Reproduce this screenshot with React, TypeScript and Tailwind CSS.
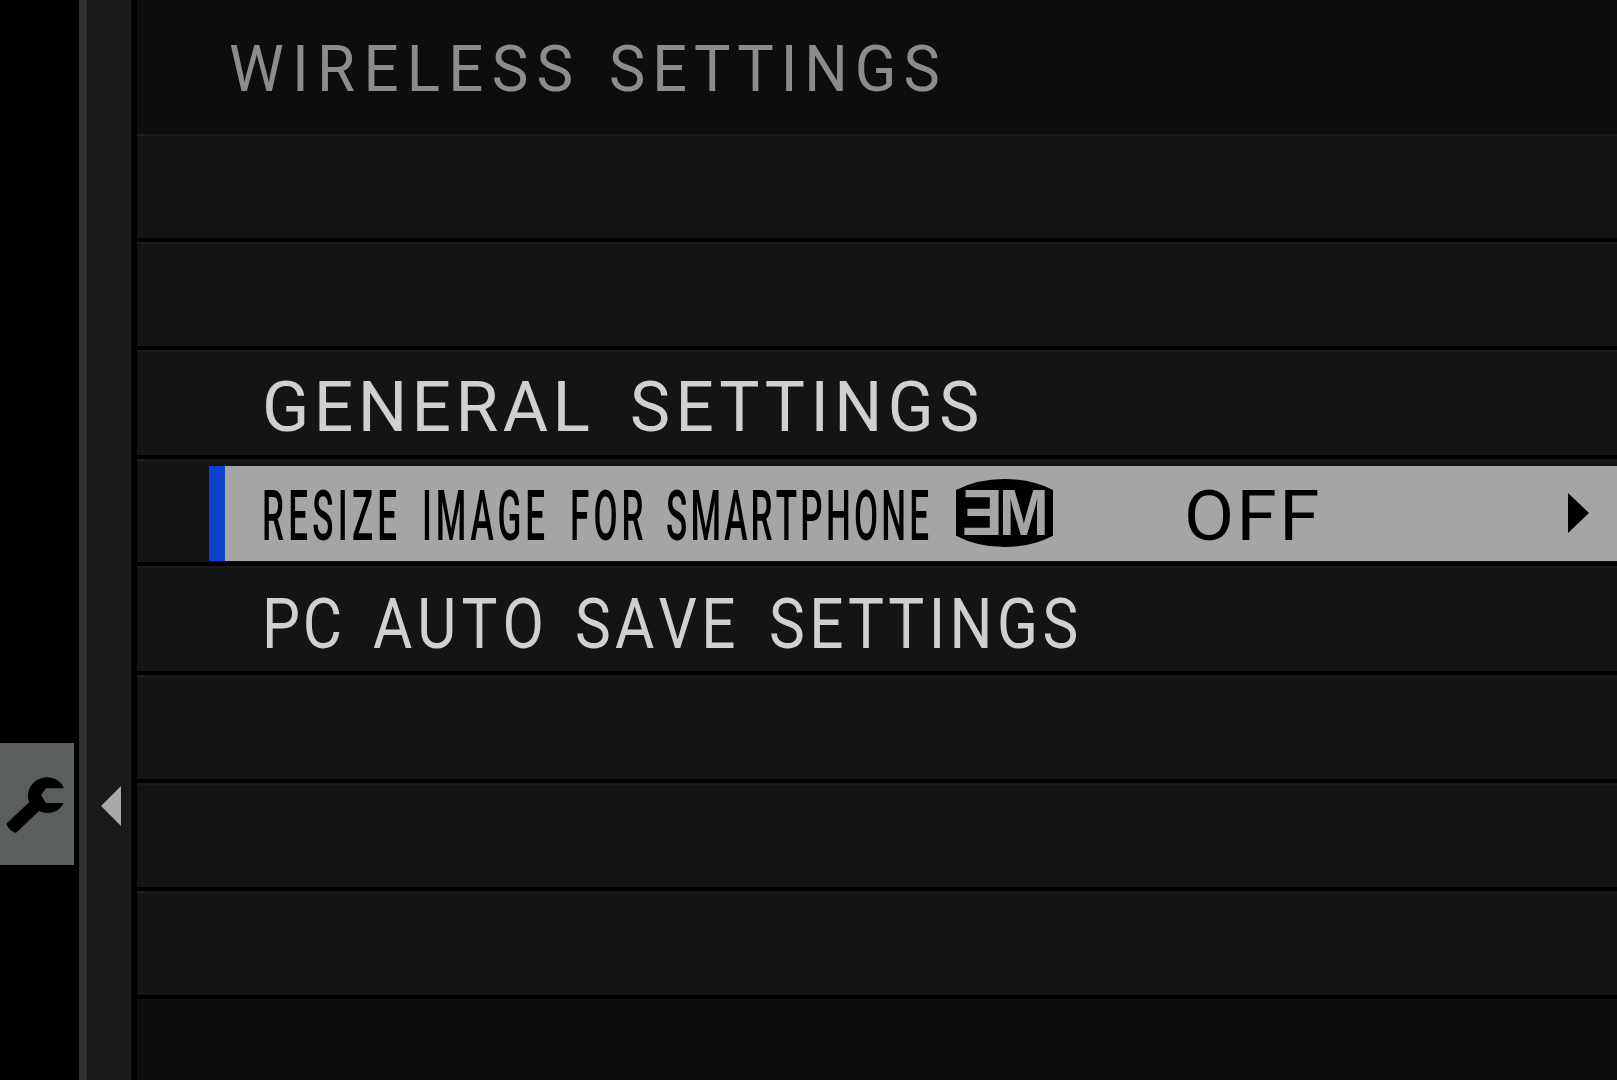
import type { ReactNode } from 'react';

function Word({ className, children }: { className: string; children: ReactNode }) {
  return (
    <span className="relative h-20 w-0 shrink-0">
      <span className={`block w-max origin-left whitespace-nowrap leading-[80px] [font-kerning:none] ${className}`}>
        {children}
      </span>
    </span>
  );
}

function Row({ className, children }: { className: string; children?: ReactNode }) {
  return (
    <div className={`shrink-0 border-t-4 border-black bg-[#141414] ${className}`}>
      <div className="h-0.5 bg-[#1b1b1b]" />
      {children}
    </div>
  );
}

function WrenchIcon() {
  return (
    <svg className="block h-[122px] w-[74px]" viewBox="0 68 222 366" aria-label="Setup">
      <path
        fill="#000"
        d="M190 199C180 182 163 171 142 171C108 171 84 196 84 226C84 234 85 240 88 245L22 307Q19 310 20 314Q28 330 45 337Q48 338 51 335L117 272C126 276 134 278 143 278C164 278 181 268 191 248H138L123 225L138 204H191Z"
      />
    </svg>
  );
}

function SizeBadge() {
  return (
    <svg
      className="ml-[28px] block h-[68px] w-[97px] shrink-0 overflow-visible"
      viewBox="79 87 291 204"
      role="img"
      aria-label="3M"
      fontFamily="'Liberation Sans', Arial, sans-serif"
      fontWeight="700"
      fontSize="193"
    >
      <path fill="#000" d="M79 120Q144 87 224 87Q305 87 370 120V257Q305 291 224 291Q144 291 79 257Z" />
      <text x="97" y="255" fill="#a5a5a5" textLength="122" lengthAdjust="spacingAndGlyphs">
        Ǝ
      </text>
      <text x="208" y="255" fill="#a5a5a5" textLength="149" lengthAdjust="spacingAndGlyphs">
        M
      </text>
    </svg>
  );
}

export default function App() {
  return (
    <div className="flex h-[1080px] w-[1617px] overflow-hidden bg-black font-[Roboto,sans-serif]">
      <aside className="w-[79px] shrink-0 pt-[743px]">
        <div className="w-[74px] bg-[#5a5e5d]">
          <WrenchIcon />
        </div>
      </aside>

      <div className="w-[52px] shrink-0 border-l-8 border-r-2 border-l-[#303030] border-r-[#1d2123] bg-[#181919] pt-[786px]">
        <svg className="ml-[14px] block h-10 w-5" viewBox="0 0 20 40">
          <path fill="#a9a9a9" d="M0 20L20 0V40Z" />
        </svg>
      </div>

      <main className="ml-[6px] flex min-w-0 flex-1 flex-col bg-[#0d0d0d]">
        <header className="flex h-[134px] shrink-0 pt-[29px] text-[65px] text-[#8c8c8c]">
          <div className="flex pl-[92.3px]">
            <Word className="scale-x-[0.95] tracking-[8.7px]">WIRELESS</Word>
            <span className="w-[379.9px]" />
            <Word className="scale-x-[0.94] tracking-[7.4px]">SETTINGS</Word>
          </div>
        </header>

        <div className="h-[104px] shrink-0 border-t-2 border-[#1b1b1b] bg-[#141414]" />
        <Row className="h-[108px]" />

        <Row className="h-[109px]">
          <div className="flex pl-[125px] pt-[16px] text-[69.5px] text-[#d0d0d0]">
            <Word className="tracking-[4.4px]">GENERAL</Word>
            <span className="w-[368.3px]" />
            <Word className="scale-x-[0.97] tracking-[5.6px]">SETTINGS</Word>
          </div>
        </Row>

        <Row className="h-[107px]">
          <div className="ml-[72px] mt-[5px] flex h-[95px] border-l-[16px] border-[#0d42cd] bg-[#a5a5a5] text-[70px] text-black">
            <div className="flex w-[703px] shrink-0 pl-[36.5px] pt-[10px] font-medium">
              <Word className="scale-x-50 tracking-[8.5px]">RESIZE</Word>
              <span className="w-[160.3px] shrink-0" />
              <Word className="scale-x-50 tracking-[7.9px]">IMAGE</Word>
              <span className="w-[148px] shrink-0" />
              <Word className="scale-x-50 tracking-[8.2px]">FOR</Word>
              <span className="w-[96.7px] shrink-0" />
              <Word className="scale-x-50 tracking-[6.4px]">SMARTPHONE</Word>
            </div>
            <div className="-mt-px flex items-center">
              <SizeBadge />
            </div>
            <div className="flex pl-[131.3px] pt-[10px]">
              <Word className="scale-x-[1.04] tracking-[2.4px]">OFF</Word>
            </div>
            <svg className="ml-auto mr-[28px] mt-[27px] block h-10 w-[21px]" viewBox="0 0 21 40">
              <path d="M0 0L21 20L0 40Z" />
            </svg>
          </div>
        </Row>

        <Row className="h-[109px]">
          <div className="flex pl-[124.5px] pt-[16px] text-[70px] text-[#d0d0d0]">
            <Word className="scale-x-[0.86] tracking-[3.2px]">PC</Word>
            <span className="w-[111.1px]" />
            <Word className="scale-x-[0.86] tracking-[5.9px]">AUTO</Word>
            <span className="w-[202.5px]" />
            <Word className="scale-x-[0.86] tracking-[5px]">SAVE</Word>
            <span className="w-[194.2px]" />
            <Word className="scale-x-[0.86] tracking-[5.2px]">SETTINGS</Word>
          </div>
        </Row>

        <Row className="h-[108px]" />
        <Row className="h-[108px]" />
        <Row className="h-[108px]" />
        <div className="h-[85px] shrink-0 border-t-4 border-black bg-[#0d0d0d]" />
      </main>
    </div>
  );
}
